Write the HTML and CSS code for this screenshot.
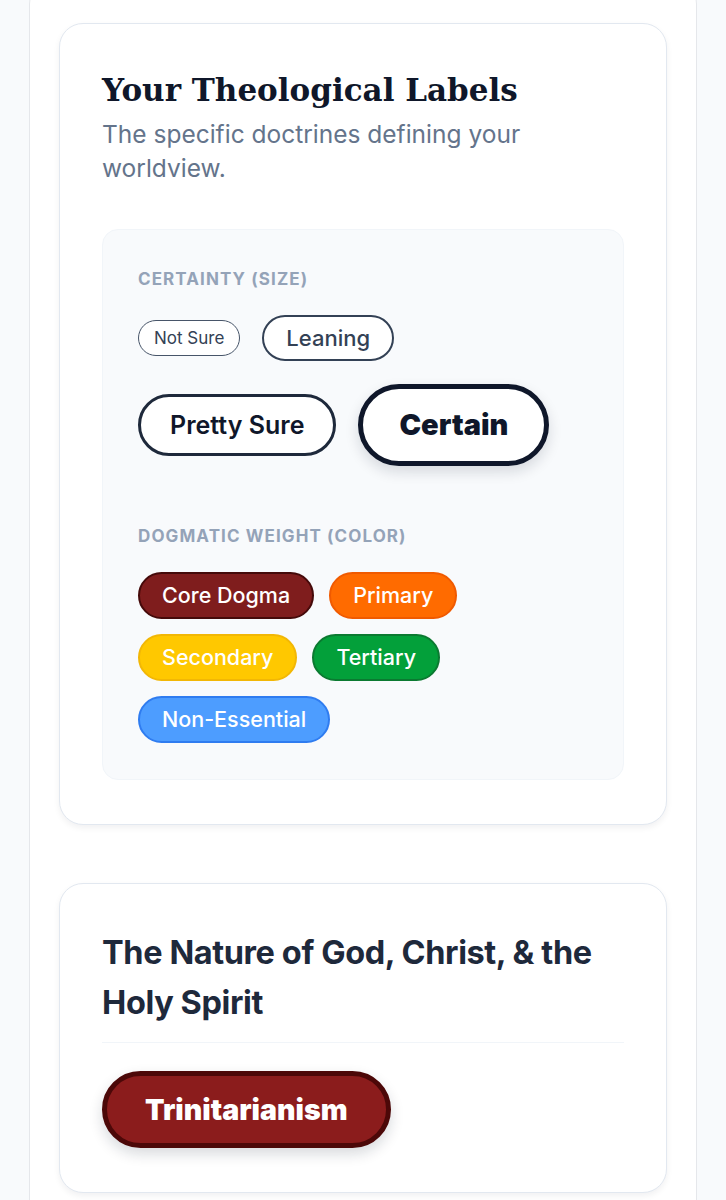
FILE: index.html
```html
<!DOCTYPE html>
<html lang="en">
<head>
<meta charset="UTF-8" />
<meta name="viewport" content="width=device-width, initial-scale=1" />
<title>Your Theological Labels</title>
<link rel="stylesheet" href="styles.css">
</head>
<body>
<div class="page">
  <div class="panel">

    <section class="card">
      <h1 class="card-title">Your Theological Labels</h1>
      <p class="card-sub">The specific doctrines defining your worldview.</p>

      <div class="legend">
        <div class="legend-label">Certainty (size)</div>
        <div class="pill-row pill-row-size">
          <span class="pill size-1">Not Sure</span>
          <span class="pill size-2">Leaning</span>
          <span class="pill size-3">Pretty Sure</span>
          <span class="pill size-4">Certain</span>
        </div>

        <div class="legend-label legend-label-2">Dogmatic weight (color)</div>
        <div class="pill-row pill-row-color">
          <span class="pill tag core">Core Dogma</span>
          <span class="pill tag primary">Primary</span>
          <span class="pill tag secondary">Secondary</span>
          <span class="pill tag tertiary">Tertiary</span>
          <span class="pill tag nonessential">Non-Essential</span>
        </div>
      </div>
    </section>

    <section class="card">
      <h2 class="section-title">The Nature of God, Christ, &amp; the Holy Spirit</h2>
      <div class="section-labels">
        <span class="pill doctrine core">Trinitarianism</span>
      </div>
    </section>

  </div>
</div>
</body>
</html>
```

FILE: styles.css
```css
body {
  margin: 0; font-family: Inter, "Noto Sans", sans-serif; background: #f8fafc; color: #1e293b;
}
.page {
  padding: 0 29px;
}
.panel {
  background: #fff;
  border: 1px solid #e5e7eb;
  border-radius: 28px;
  margin-top: -24px;
  padding: 46px 29px 40px;
  display: flex;
  flex-direction: column;
  gap: 58px;
}
.card {
  background: #fff;
  border: 1px solid #e2e8f0;
  border-radius: 24px;
  box-shadow: 0 3px 6px rgb(15 23 42 / 0.06);
  padding: 44px 42px 44px;
}
.card-title {
  margin: 0;
  font-family: "DejaVu Serif", "Liberation Serif", serif;
  font-weight: 700;
  font-size: 31px;
  line-height: 44px;
  color: #0f172a;
}
.card-sub {
  margin: 5px 0 44px;
  font-size: 24.5px;
  line-height: 34px;
  color: #64748b;
  max-width: 460px;
}
.legend {
  background: #f8fafc;
  border: 1px solid #f1f5f9;
  border-radius: 16px;
  padding: 39px 35px 36px;
}
.legend-label {
  font-size: 17px;
  font-weight: 700;
  letter-spacing: 1.1px;
  text-transform: uppercase;
  color: #94a3b8;
  line-height: 20px;
  margin-bottom: 26px;
}
.legend-label-2 {
  margin-top: 60px;
  margin-bottom: 26px;
}
.pill-row {
  display: flex;
  flex-wrap: wrap;
  align-items: center;
}
.pill-row-size {
  gap: 23px 22px;
}
.pill-row-color {
  gap: 15px 15px;
}
.pill {
  display: inline-block;
  border-radius: 999px;
  background: #fff;
  white-space: nowrap;
  box-sizing: border-box;
}
.size-1 {
  border: 1px solid #475569;
  color: #334155;
  font-size: 17px;
  line-height: 34px;
  padding: 0 15px;
}
.size-2 {
  border: 2.5px solid #334155;
  color: #334155;
  font-size: 22px;
  font-weight: 500;
  line-height: 42px;
  padding: 0 22px;
}
.size-3 {
  border: 3px solid #1e293b;
  color: #0f172a;
  font-size: 25px;
  font-weight: 600;
  line-height: 56px;
  padding: 0 29px;
}
.size-4 {
  border: 5px solid #0f172a;
  color: #0f172a;
  font-size: 29px;
  font-weight: 900;
  line-height: 72px;
  padding: 0 36px;
  box-shadow: 0 6px 14px rgb(15 23 42 / 0.14);
}
.tag {
  border: 2.5px solid;
  color: #fff;
  font-size: 21.5px;
  font-weight: 500;
  line-height: 43px;
  padding: 0 22px;
}
.core {
  background: #7f1d1d;
  border-color: #450a0a;
}
.primary {
  background: #ff6b00;
  border-color: #f05a00;
}
.secondary {
  background: #ffc800;
  border-color: #f2b705;
}
.tertiary {
  background: #03a03a;
  border-color: #0b7a31;
}
.nonessential {
  background: #4d9dff;
  border-color: #2f7cf0;
}
.section-title {
  margin: 0;
  font-size: 32.5px;
  font-weight: 700;
  line-height: 50px;
  letter-spacing: -0.4px;
  color: #1e293b;
  padding-bottom: 14px;
  border-bottom: 1px solid #f1f5f9;
}
.section-labels {
  padding-top: 28px;
  display: flex;
  flex-wrap: wrap;
  gap: 15px;
}
.doctrine {
  background: #8b1c1c;
  border: 5px solid #4c0808;
  color: #fff;
  font-size: 28.5px;
  font-weight: 900;
  line-height: 67px;
  padding: 0 38px;
  box-shadow: 0 6px 14px rgb(15 23 42 / 0.16);
}
```
